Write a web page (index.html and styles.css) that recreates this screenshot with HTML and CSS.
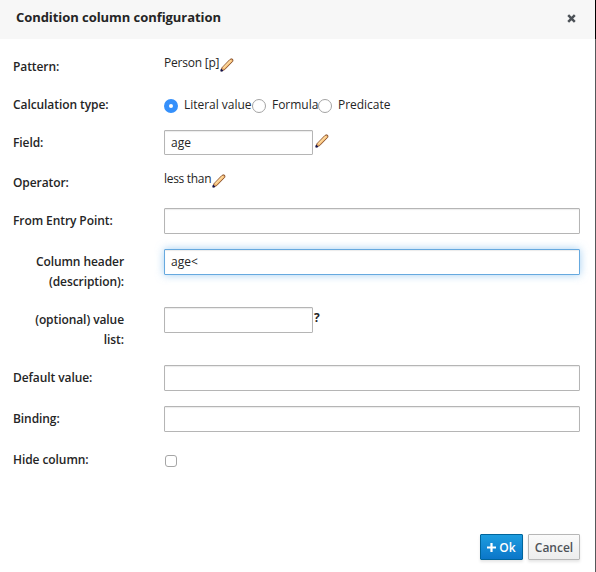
FILE: index.html
```
<!DOCTYPE html>
<html lang="en">
<head>
<meta charset="utf-8">
<title>Condition column configuration</title>
<link rel="stylesheet" href="styles.css">
</head>
<body>
<svg class="defs" width="0" height="0" aria-hidden="true">
  <symbol id="pencil" viewBox="0 0 14 14">
    <path d="M1 13L2 9.7L9.7 1.7Q11 .5 12.4 1Q13.4 2 12.6 3.5L4.6 11.7Z" fill="#f5bd78" stroke="#7d4420" stroke-width=".9"/>
    <path d="M3.4 9.8L11 2.3" stroke="#ffdca0" stroke-width="1.3"/>
    <path d="M.5 13.5V11.4L1.6 10.8L3.2 12.4L2.6 13.5Z" fill="#14144e"/>
  </symbol>
</svg>
<div class="dialog">
  <header class="header">
    <h1 class="title">Condition column configuration</h1>
    <svg class="close" width="9" height="9" viewBox="0 0 9 9"><path d="M1.2 1.2L7.8 7.8M7.8 1.2L1.2 7.8" stroke="#4d5258" stroke-width="2.5"/></svg>
  </header>
  <form class="form">
    <div class="row row-pattern"><label class="label">Pattern:</label><div class="value"><span class="pattern-text">Person [p]</span><svg class="pencil"><use href="#pencil"/></svg></div></div>
    <div class="row row-type"><label class="label">Calculation type:</label><div class="value radios">
      <span class="radio checked"></span><span class="option literal">Literal value</span><span class="radio"></span><span class="option formula">Formula</span><span class="radio"></span><span class="option">Predicate</span></div></div>
    <div class="row row-field"><label class="label">Field:</label><div class="value"><input class="input short" value="age"><svg class="pencil field-pencil"><use href="#pencil"/></svg></div></div>
    <div class="row row-operator"><label class="label">Operator:</label><div class="value"><span class="operator-text">less than</span><svg class="pencil"><use href="#pencil"/></svg></div></div>
    <div class="row"><label class="label">From Entry Point:</label><div class="value"><input class="input"></div></div>
    <div class="row row-tall"><label class="label right">Column header (description):</label><div class="value"><input class="input focused" value="age&lt;"></div></div>
    <div class="row row-tall"><label class="label right">(optional) value list:</label><div class="value"><input class="input short"><b class="help">?</b></div></div>
    <div class="row"><label class="label">Default value:</label><div class="value"><input class="input"></div></div>
    <div class="row"><label class="label">Binding:</label><div class="value"><input class="input"></div></div>
    <div class="row"><label class="label">Hide column:</label><div class="value"><span class="checkbox"></span></div></div>
  </form>
  <footer class="footer">
    <button class="button primary"><svg width="9" height="9" viewBox="0 0 9 9"><path d="M4.5 0V9M0 4.5H9" stroke="#fff" stroke-width="2.2"/></svg>Ok</button>
    <button class="button">Cancel</button>
  </footer>
</div>
</body>
</html>
```
FILE: styles.css
```
* { box-sizing: border-box; }
body {
  margin: 0;
  background: #fff;
  font: 12px/20px "Open Sans", sans-serif;
  color: #252525;
}
.defs { position: absolute; }
.dialog {
  height: 572px;
  display: flex;
  flex-direction: column;
  border-right: 1px solid #56585a;
}
.header {
  height: 39px;
  flex: none;
  display: flex;
  justify-content: space-between;
  margin-right: -1px;
  padding: 7px 19px 0 16px;
  border-right: 1px solid #000;
  background: #f7f7f7;
}
.title { margin: 0; font-size: 13px; line-height: 20px; font-weight: 700; letter-spacing: -.06px; }
.close { margin-top: 7px; }
.form { padding: 13px 15px 0 13px; flex: 1; }
.row { display: grid; grid-template-columns: 111px 1fr; column-gap: 40px; height: 41px; }
.row-pattern { height: 39px; }
.row-type { height: 39px; }
.row-field { height: 38px; }
.row-operator { height: 40px; }
.row-tall { height: 58px; }
.label { padding-top: 3px; font-weight: 600; white-space: nowrap; letter-spacing: -.08px; }
.row-pattern .label, .row-operator .label { padding-top: 5px; }
.row-type .label { padding-top: 4px; }
.label.right { text-align: right; white-space: normal; padding-left: 10px; }
.value { display: flex; align-items: flex-start; white-space: nowrap; }
.pencil { width: 14px; height: 14px; margin: 6px 0 0 2px; }
.field-pencil { margin-top: 4px; }
.pattern-text { width: 54px; padding-top: 1px; letter-spacing: -.22px; }
.operator-text { width: 46px; padding-top: 1px; letter-spacing: -.3px; }
.radios { padding-top: 3px; }
.radio {
  width: 14px; height: 14px; flex: none;
  margin-top: 5px;
  border: 1px solid #a3a3a3;
  border-radius: 50%;
  background: #fff;
}
.radio.checked { border: 5px solid #3590fb; }
.option { margin-left: 6px; padding-top: 1px; letter-spacing: -.03px; }
.literal { width: 68px; }
.formula { width: 46px; }
.input {
  width: 100%; height: 26px;
  margin: 0; padding: 0 6px;
  border: 1px solid #b5b5b5;
  border-radius: 1px;
  background: #fff;
  box-shadow: inset 0 1px 1px rgba(0, 0, 0, .08);
  font: inherit; color: inherit;
  outline: 0;
}
.row-field .input { height: 25px; }
.input.short { width: 149px; }
.input.focused { padding-bottom: 1px; border-color: #66a9df; box-shadow: inset 0 1px 1px rgba(0, 0, 0, .08), 0 0 8px rgba(102, 175, 233, .6); }
.help { margin: 1px 0 0 1px; }
.checkbox {
  width: 12px; height: 12px;
  margin: 8px 0 0 1px;
  border: 1px solid #a6a6a6;
  border-radius: 3px;
  background: #fff;
}
.footer { display: flex; justify-content: flex-end; gap: 5px; padding: 0 15px 12px; }
.button {
  width: 52px; height: 26px;
  display: flex; align-items: center; justify-content: center; gap: 3px;
  padding: 2px 0 0;
  border: 1px solid #b7b7b7;
  border-radius: 1px;
  background: linear-gradient(#fafafa, #ededed);
  box-shadow: 0 2px 3px rgba(3, 3, 3, .1);
  color: #4d5258;
  font: 600 12px/20px "Open Sans", sans-serif;
}
.button svg { margin-top: -1px; }
.button.primary { width: 43px; border-color: #00659c; background: linear-gradient(#1d9ddf, #0b76c9); color: #fff; }
```
